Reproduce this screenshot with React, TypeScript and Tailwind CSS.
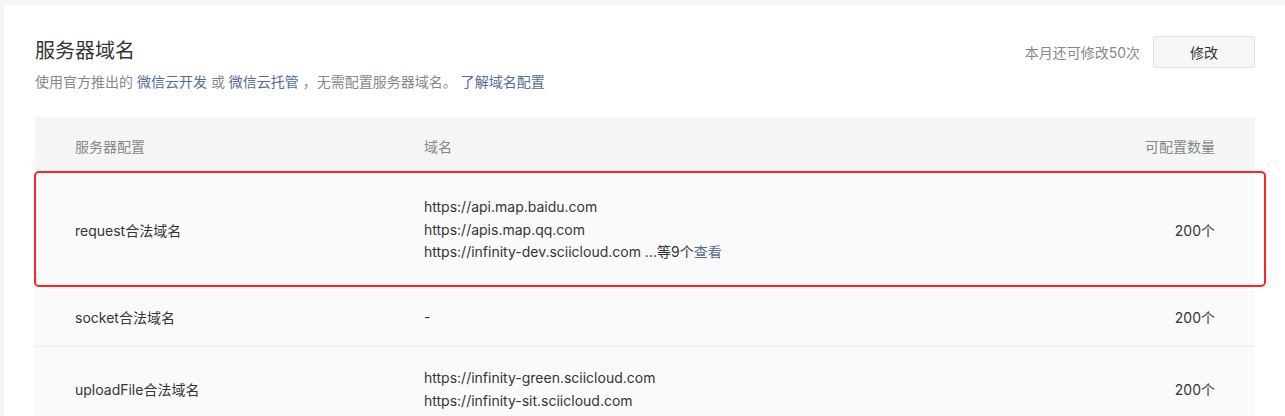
import React from 'react';

interface DomainRow {
  name: string;
  domains: React.ReactNode[];
  count: string;
  height: string;
  highlight?: boolean;
}

const rows: DomainRow[] = [
  {
    name: 'request合法域名',
    domains: [
      'https://api.map.baidu.com',
      'https://apis.map.qq.com',
      <>
        https://infinity-dev.sciicloud.com ...等9个
        <a className="text-[#576b95] cursor-pointer">查看</a>
      </>,
    ],
    count: '200个',
    height: 'h-[115px]',
    highlight: true,
  },
  {
    name: 'socket合法域名',
    domains: ['-'],
    count: '200个',
    height: 'h-[60px]',
  },
  {
    name: 'uploadFile合法域名',
    domains: ['https://infinity-green.sciicloud.com', 'https://infinity-sit.sciicloud.com'],
    count: '200个',
    height: 'h-[84px]',
  },
];

const App: React.FC = () => {
  return (
    <div
      className="h-[416px] overflow-hidden bg-[#f3f5f6] pt-[5px] pl-[4px] text-[#353535]"
      style={{ fontFamily: 'Inter, "Noto Sans CJK SC", sans-serif' }}
    >
      <div className="bg-white rounded-tl-[4px] min-h-[500px] pl-[31px] pr-[30px] pt-[32px]">
        {/* Header */}
        <div className="flex items-start justify-between">
          <div>
            <h2 className="text-[20px] leading-[28px] font-normal">服务器域名</h2>
            <p className="mt-[7px] text-[14px] leading-[20px] text-[#888]">
              使用官方推出的 <a className="text-[#576b95] cursor-pointer">微信云开发</a> 或{' '}
              <a className="text-[#576b95] cursor-pointer">微信云托管</a> ，无需配置服务器域名。{' '}
              <a className="text-[#576b95] cursor-pointer">了解域名配置</a>
            </p>
          </div>
          <div className="flex items-center gap-[13px] mt-[-1px]">
            <span className="text-[14px] text-[#888]">本月还可修改50次</span>
            <button className="w-[102px] h-[32px] bg-[#f7f7f7] border border-[#e0e0e0] rounded-[3px] text-[14px] text-[#353535]">
              修改
            </button>
          </div>
        </div>

        {/* Table */}
        <div className="mt-[25px] text-[14px]">
          <div className="grid grid-cols-[389px_1fr_200px] h-[55px] pt-[20px] leading-[20px] bg-[#f3f5f6] text-[#888]">
            <div className="pl-[40px]">服务器配置</div>
            <div>域名</div>
            <div className="pr-[40px] text-right">可配置数量</div>
          </div>
          {rows.map((row) => (
            <div
              key={row.name}
              className={`relative grid grid-cols-[389px_1fr_200px] items-center bg-[#fafafa] border-b border-[#eaeaea] ${row.height}`}
            >
              <div className="pl-[40px] pt-[2px]">{row.name}</div>
              <div className="leading-[22.5px] pt-[2px]">
                {row.domains.map((d, i) => (
                  <div key={i}>{d}</div>
                ))}
              </div>
              <div className="pr-[40px] text-right pt-[2px]">{row.count}</div>
              {row.highlight && (
                <div className="absolute -left-[1px] -top-[1px] -right-[11px] -bottom-[1px] border-[2.5px] border-[#ff2323] rounded-[5px] pointer-events-none" />
              )}
            </div>
          ))}
        </div>
      </div>
    </div>
  );
};

export default App;
